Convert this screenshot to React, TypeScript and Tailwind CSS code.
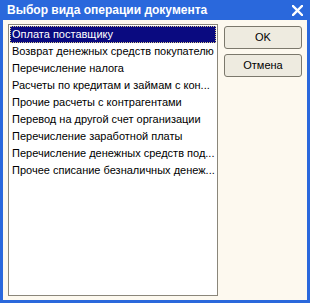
import React from 'react';

const items = [
    'Оплата поставщику',
    'Возврат денежных средств покупателю',
    'Перечисление налога',
    'Расчеты по кредитам и займам с кон...',
    'Прочие расчеты с контрагентами',
    'Перевод на другой счет организации',
    'Перечисление заработной платы',
    'Перечисление денежных средств под...',
    'Прочее списание безналичных денеж...',
];

const font = { fontFamily: '"Liberation Sans", Arial, sans-serif' };

export default function App() {
    return (
        <div className="w-[310px] h-[303px] flex flex-col bg-[#2a68dc]" style={font}>
            {/* Title bar */}
            <div className="h-[20px] flex items-center justify-between pl-[7px] pr-[7px] bg-[#2a68dc]">
                <span className="text-white font-bold text-[12px] leading-none">Выбор вида операции документа</span>
                <svg width="11" height="11" viewBox="0 0 11 11" className="mt-[1px]">
                    <path d="M1 1 L10 10 M10 1 L1 10" stroke="#fff" strokeWidth="2.4" strokeLinecap="square" />
                </svg>
            </div>

            {/* Client area */}
            <div className="flex-1 mx-[3px] mb-[3px] bg-[#fdf9ef] flex gap-[6px] pl-[5px] pr-[5px] pt-[4px] pb-[4px]">
                {/* List */}
                <div className="w-[210px] h-[272px] border border-[#8a867a] bg-white p-px">
                    {items.map((item, i) => (
                        <div
                            key={item}
                            className={
                                i === 0
                                    ? 'h-[17px] pl-[2px] flex items-center text-[11px] whitespace-nowrap bg-[#0a0a80] text-white outline-1 outline-dotted outline-[#d8c88a] -outline-offset-1'
                                    : 'h-[17px] pl-[2px] flex items-center text-[11px] whitespace-nowrap text-black'
                            }
                        >
                            {item}
                        </div>
                    ))}
                </div>

                {/* Buttons */}
                <div className="flex flex-col gap-[5px] pt-[2px]">
                    <button className="w-[78px] h-[23px] rounded-[3px] border border-[#7b786c] bg-[#eeebe0] text-[11px] text-black">
                        OK
                    </button>
                    <button className="w-[78px] h-[23px] rounded-[3px] border border-[#7b786c] bg-[#eeebe0] text-[11px] text-black">
                        Отмена
                    </button>
                </div>
            </div>
        </div>
    );
}
